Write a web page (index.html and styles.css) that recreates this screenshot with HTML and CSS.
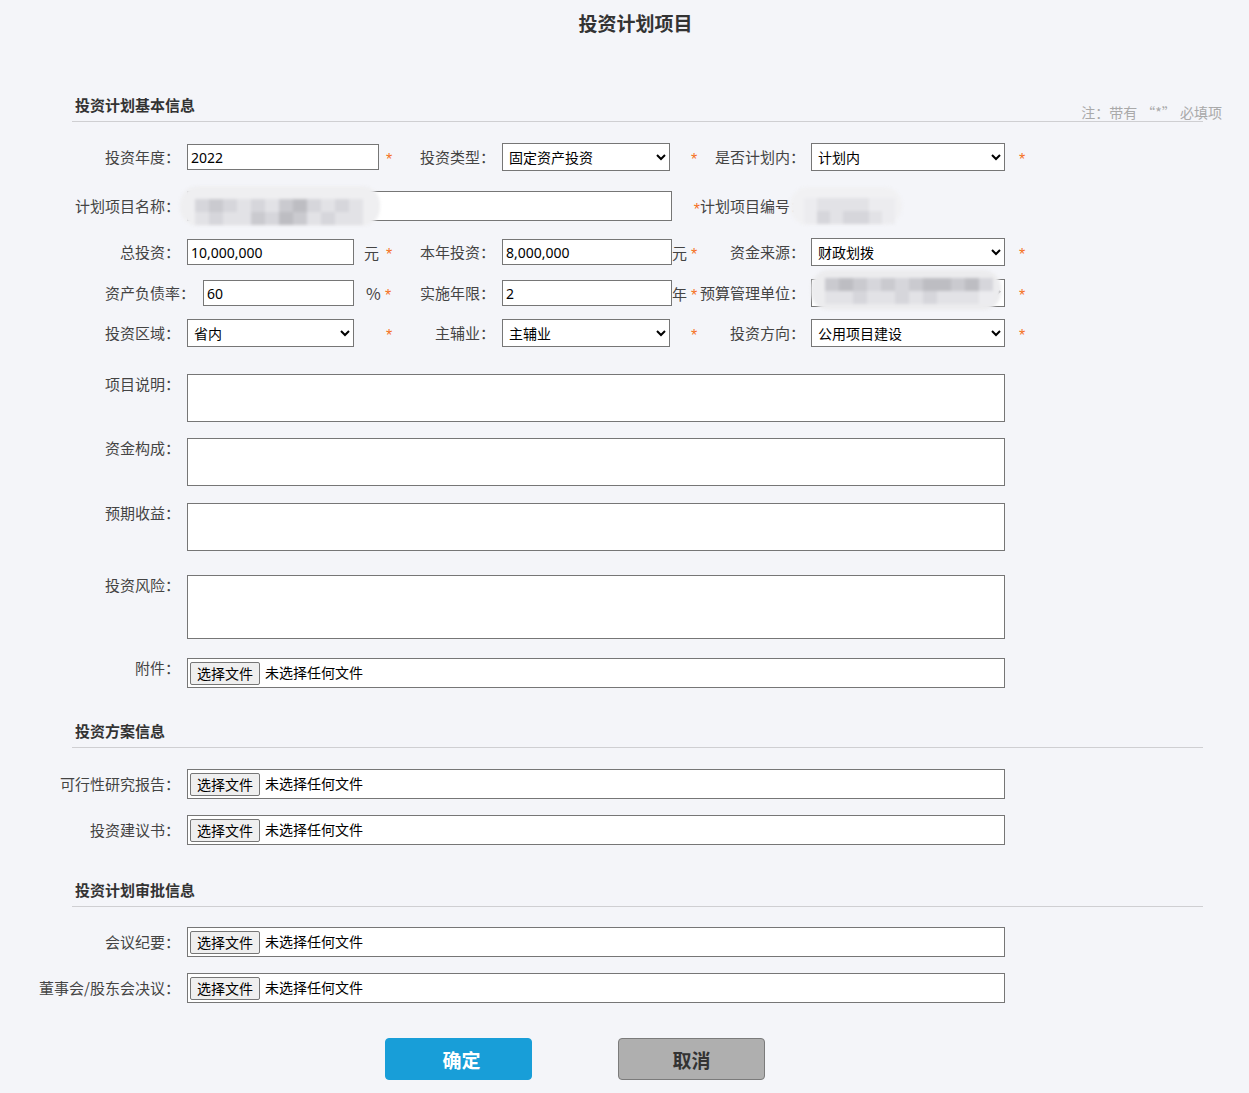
FILE: index.html
```html
<!DOCTYPE html>
<html lang="zh-CN">
<head>
<meta charset="utf-8">
<title>投资计划项目</title>
<link rel="stylesheet" href="styles.css">
</head>
<body>
<h1 class="page-title">投资计划项目</h1>
<form class="form">
  <div class="section-head first">
    <h2 class="section-title">投资计划基本信息</h2>
    <span class="note">注：带有 <span class="q">“*”</span> 必填项</span>
  </div>

  <div class="grid-row r1">
    <label class="lbl">投资年度：</label>
    <div class="fld fb">
      <input class="txt w192" value="2022">
      <span class="req">*</span>
    </div>
    <label class="lbl">投资类型：</label>
    <div class="fld fd">
      <select class="sel w168"><option>固定资产投资</option></select>
      <span class="req">*</span>
    </div>
    <label class="lbl">是否计划内：</label>
    <div class="fld ff">
      <select class="sel w194"><option>计划内</option></select>
      <span class="req">*</span>
    </div>
  </div>

  <div class="grid-row r2">
    <label class="lbl">计划项目名称：</label>
    <div class="fld fwide">
      <input class="txt w485 h30" value="">
      <div class="blur blur-name">
        <div class="px-grid g12">
          <i class="p2"></i><i class="p3"></i><i class="p2"></i><i class="p1"></i><i class="p2"></i><i class="p1"></i><i class="p3"></i><i class="p4"></i><i class="p2"></i><i class="p1"></i><i class="p2"></i><i class="p1"></i>
          <i class="p1"></i><i class="p2"></i><i class="p1"></i><i class="p1"></i><i class="p3"></i><i class="p2"></i><i class="p4"></i><i class="p3"></i><i class="p1"></i><i class="p2"></i><i class="p1"></i><i class="p1"></i>
        </div>
      </div>
    </div>
    <label class="lbl"><span class="req-inline">*</span>计划项目编号：</label>
    <div class="fld ff">
      <div class="blur blur-code">
        <div class="px-grid g7">
          <i class="p0"></i><i class="p1"></i><i class="p1"></i><i class="p1"></i><i class="p1"></i><i class="p0"></i><i class="p0"></i>
          <i class="p0"></i><i class="p2"></i><i class="p1"></i><i class="p2"></i><i class="p2"></i><i class="p1"></i><i class="p0"></i>
        </div>
      </div>
    </div>
  </div>

  <div class="grid-row r3">
    <label class="lbl">总投资：</label>
    <div class="fld fb">
      <input class="txt w167" value="10,000,000">
      <span class="unit u-yuan">元</span>
      <span class="req">*</span>
    </div>
    <label class="lbl">本年投资：</label>
    <div class="fld fd">
      <input class="txt w170" value="8,000,000">
      <span class="unit">元</span>
      <span class="req">*</span>
    </div>
    <label class="lbl">资金来源：</label>
    <div class="fld ff">
      <select class="sel w194"><option>财政划拨</option></select>
      <span class="req">*</span>
    </div>
  </div>

  <div class="grid-row r4">
    <label class="lbl lbl-wide">资产负债率：</label>
    <div class="fld fb">
      <input class="txt w151 shift" value="60">
      <span class="unit u-pct">%</span>
      <span class="req req-pct">*</span>
    </div>
    <label class="lbl">实施年限：</label>
    <div class="fld fd">
      <input class="txt w170" value="2">
      <span class="unit">年</span>
      <span class="req">*</span>
    </div>
    <label class="lbl">预算管理单位：</label>
    <div class="fld ff">
      <select class="sel w194 h28"><option></option></select>
      <div class="blur blur-unit">
        <div class="px-grid g12b">
          <i class="p3"></i><i class="p4"></i><i class="p3"></i><i class="p2"></i><i class="p3"></i><i class="p2"></i><i class="p3"></i><i class="p4"></i><i class="p4"></i><i class="p3"></i><i class="p4"></i><i class="p2"></i>
          <i class="p1"></i><i class="p1"></i><i class="p2"></i><i class="p1"></i><i class="p1"></i><i class="p2"></i><i class="p1"></i><i class="p2"></i><i class="p1"></i><i class="p1"></i><i class="p1"></i><i class="p0"></i>
        </div>
      </div>
      <span class="req">*</span>
    </div>
  </div>

  <div class="grid-row r5">
    <label class="lbl">投资区域：</label>
    <div class="fld fb">
      <select class="sel w167"><option>省内</option></select>
      <span class="req">*</span>
    </div>
    <label class="lbl">主辅业：</label>
    <div class="fld fd">
      <select class="sel w168"><option>主辅业</option></select>
      <span class="req">*</span>
    </div>
    <label class="lbl">投资方向：</label>
    <div class="fld ff">
      <select class="sel w194"><option>公用项目建设</option></select>
      <span class="req">*</span>
    </div>
  </div>

  <div class="grid-row top-row t1">
    <label class="lbl lbl-top">项目说明：</label>
    <div class="fld fspan"><textarea class="area h48"></textarea></div>
  </div>
  <div class="grid-row top-row t2">
    <label class="lbl lbl-top">资金构成：</label>
    <div class="fld fspan"><textarea class="area h48"></textarea></div>
  </div>
  <div class="grid-row top-row t3">
    <label class="lbl lbl-top">预期收益：</label>
    <div class="fld fspan"><textarea class="area h48"></textarea></div>
  </div>
  <div class="grid-row top-row t4">
    <label class="lbl lbl-top">投资风险：</label>
    <div class="fld fspan"><textarea class="area h64"></textarea></div>
  </div>
  <div class="grid-row top-row t5">
    <label class="lbl lbl-top">附件：</label>
    <div class="fld fspan">
      <div class="file"><span class="file-btn">选择文件</span><span class="file-txt">未选择任何文件</span></div>
    </div>
  </div>

  <div class="section-head second">
    <h2 class="section-title">投资方案信息</h2>
  </div>
  <div class="grid-row file-row f1">
    <label class="lbl">可行性研究报告：</label>
    <div class="fld fspan">
      <div class="file"><span class="file-btn">选择文件</span><span class="file-txt">未选择任何文件</span></div>
    </div>
  </div>
  <div class="grid-row file-row f2">
    <label class="lbl">投资建议书：</label>
    <div class="fld fspan">
      <div class="file"><span class="file-btn">选择文件</span><span class="file-txt">未选择任何文件</span></div>
    </div>
  </div>

  <div class="section-head third">
    <h2 class="section-title">投资计划审批信息</h2>
  </div>
  <div class="grid-row file-row f3">
    <label class="lbl">会议纪要：</label>
    <div class="fld fspan">
      <div class="file"><span class="file-btn">选择文件</span><span class="file-txt">未选择任何文件</span></div>
    </div>
  </div>
  <div class="grid-row file-row f2">
    <label class="lbl">董事会/股东会决议：</label>
    <div class="fld fspan">
      <div class="file"><span class="file-btn">选择文件</span><span class="file-txt">未选择任何文件</span></div>
    </div>
  </div>

  <div class="actions">
    <button type="button" class="btn btn-ok">确定</button>
    <button type="button" class="btn btn-cancel">取消</button>
  </div>
</form>
</body>
</html>
```

FILE: styles.css
```css
* { box-sizing: border-box; }

html, body {
  margin: 0;
  padding: 0;
  background: #f4f5f9;
}

body {
  font-family: "Noto Sans CJK SC", "Noto Sans", sans-serif;
  color: #444;
  font-size: 15px;
  width: 1249px;
  min-height: 1093px;
}

.page-title {
  margin: 0;
  padding: 9px 0 0 22px;
  height: 37px;
  line-height: 28px;
  font-size: 19px;
  font-weight: bold;
  color: #333;
  text-align: center;
}

.form {
  margin: 0;
}

.section-head {
  display: flex;
  justify-content: space-between;
  align-items: flex-end;
  margin: 0 46px 0 72px;
  padding-left: 3px;
  border-bottom: 1px solid #cfcfd2;
}
.section-head.first { margin-top: 58px; }
.section-head.second { margin-top: 33px; }
.section-head.third { margin-top: 35px; }

.section-title {
  margin: 0 0 6px;
  font-size: 15px;
  line-height: 20px;
  font-weight: bold;
  color: #333;
}

.note {
  font-size: 14px;
  line-height: 18px;
  color: #a9a9a9;
  margin-right: -19px;
  white-space: nowrap;
}
.note .q { margin: 0 1px; }

.grid-row {
  display: grid;
  grid-template-columns: 140px 220px 95px 205px 105px 235px;
  padding-left: 40px;
  align-items: center;
}
.r1 { margin-top: 10px; height: 50px; }
.r2 { height: 48px; }
.r3 { height: 44px; }
.r4 { height: 38px; }
.r5 { height: 42px; }

.top-row { align-items: start; }
.t1 { margin-top: 20px; }
.t2 { margin-top: 16px; }
.t3 { margin-top: 17px; }
.t4 { margin-top: 24px; }
.t5 { margin-top: 19px; }

.file-row { height: 30px; }
.f1 { margin-top: 21px; }
.f2 { margin-top: 16px; }
.f3 { margin-top: 20px; }

.lbl {
  justify-self: end;
  white-space: nowrap;
  font-size: 15px;
  line-height: 20px;
  color: #444;
}
.lbl-wide { margin-right: -15px; }
.lbl-top { align-self: start; }

.req-inline, .req {
  color: #f5711f;
  font-family: "Liberation Sans", sans-serif;
}
.req-inline {
  font-size: 16px;
  position: relative;
  top: 3px;
}

.fld {
  display: flex;
  align-items: center;
  height: 100%;
  position: relative;
}
.fb { padding-left: 7px; }
.fd { padding-left: 7px; }
.ff { padding-left: 6px; }
.fwide { grid-column: 2 / span 3; padding-left: 7px; }
.fspan { grid-column: 2 / -1; padding-left: 7px; }

.req {
  font-size: 16px;
  line-height: 16px;
  width: 12px;
  text-align: center;
  flex: none;
  position: relative;
  top: 3px;
}
.fb .req { margin-left: auto; margin-right: 5px; }
.fb .req-pct { margin-right: 9px; }
.fd .req { margin-left: auto; }
.ff .req { margin-left: 11px; }

.unit {
  width: 16px;
  flex: none;
  font-size: 15px;
  color: #444;
}
.u-yuan { margin-left: 10px; }
.u-pct { margin-left: 12px; font-size: 16px; }

.txt {
  height: 26px;
  border: 1px solid #767676;
  background: #fff;
  padding: 0 3px;
  font-family: "Noto Sans", "Noto Sans CJK SC", sans-serif;
  font-size: 14px;
  color: #000;
  border-radius: 0;
  outline: none;
  flex: none;
}
.shift { margin-left: 16px; }
.h30 { height: 30px; }

.w151 { width: 151px; }
.w167 { width: 167px; }
.w168 { width: 168px; }
.w170 { width: 170px; }
.w192 { width: 192px; }
.w194 { width: 194px; }
.w485 { width: 485px; }

.sel {
  height: 28px;
  border: 1px solid #767676;
  border-radius: 0;
  background-color: #fff;
  font-family: "Noto Sans CJK SC", sans-serif;
  font-size: 14px;
  color: #000;
  padding: 0 2px;
  flex: none;
}

.area {
  display: block;
  width: 818px;
  border: 1px solid #767676;
  background: #fff;
  border-radius: 0;
  resize: none;
}
.h48 { height: 48px; }
.h64 { height: 64px; }

.file {
  width: 818px;
  height: 30px;
  border: 1px solid #767676;
  background: #fff;
  display: flex;
  align-items: center;
  padding-left: 2px;
}
.file-btn {
  width: 70px;
  height: 23px;
  border: 1px solid #767676;
  border-radius: 2px;
  background: #efefef;
  font-size: 14px;
  line-height: 20px;
  color: #000;
  text-align: center;
}
.file-txt {
  margin-left: 5px;
  font-size: 14px;
  line-height: 20px;
  color: #000;
  position: relative;
  top: -1px;
}

/* blurred (redacted) values */
.blur {
  position: absolute;
  background: #efeff1;
  border-radius: 18px;
  filter: blur(1.5px);
}
.blur-name {
  left: 0;
  top: 4px;
  width: 200px;
  height: 40px;
  padding: 13px 0 0 15px;
}
.blur-code {
  left: -15px;
  top: 5px;
  width: 112px;
  height: 38px;
  padding: 11px 0 0 14px;
  background: #f1f1f3;
}
.blur-unit {
  left: 6px;
  top: -4px;
  width: 190px;
  height: 40px;
  padding: 8px 0 0 14px;
  background: #ececee;
}

.px-grid {
  display: grid;
  grid-auto-rows: 13px;
}
.g12 { grid-template-columns: repeat(12, 14px); }
.g7 { grid-template-columns: repeat(7, 13px); }
.g12b { grid-template-columns: repeat(12, 14px); }
.px-grid i { display: block; }
.p0 { background: #ececef; }
.p1 { background: #e2e2e6; }
.p2 { background: #d6d6db; }
.p3 { background: #cacacf; }
.p4 { background: #bdbdc2; }

.actions {
  display: flex;
  gap: 86px;
  padding-left: 385px;
  margin-top: 35px;
}
.btn {
  width: 147px;
  height: 42px;
  border-radius: 4px;
  font-family: "Noto Sans CJK SC", sans-serif;
  font-size: 19px;
  font-weight: bold;
  cursor: pointer;
  padding: 0 0 0 6px;
}
.btn-ok {
  background: #189ed8;
  border: 1px solid #189ed8;
  color: #fff;
}
.btn-cancel {
  background: #afafaf;
  border: 1px solid #7b7b7b;
  color: #333;
  padding: 0;
}
```
